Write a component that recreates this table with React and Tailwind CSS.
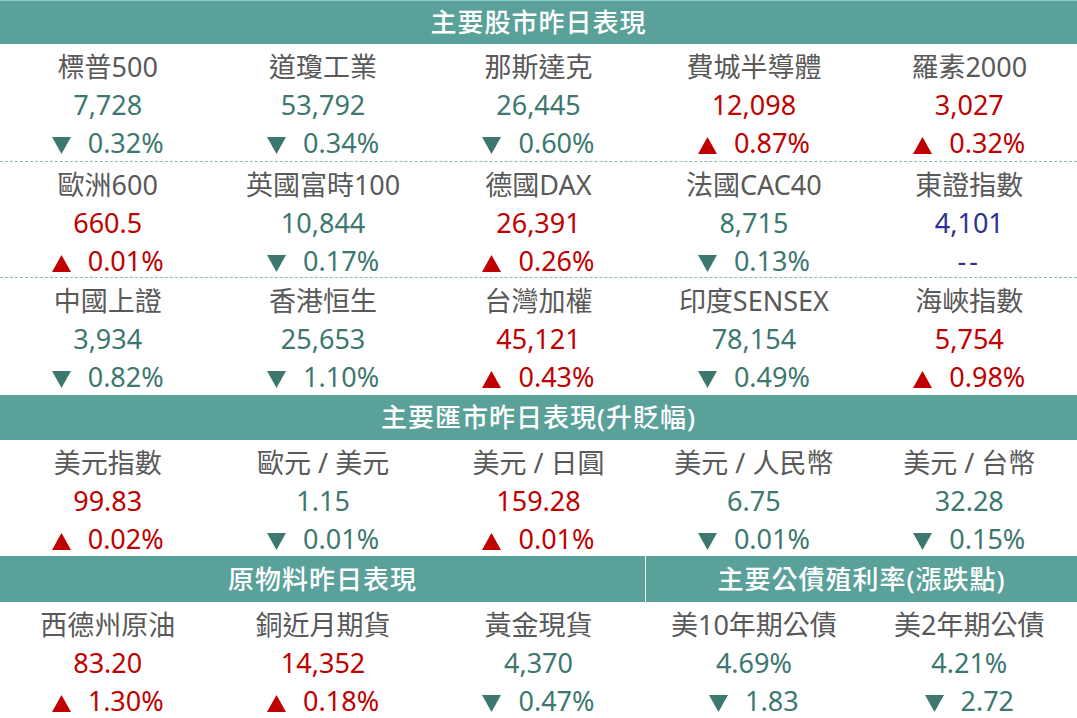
import React from "react";

const FONT = { fontFamily: '"Noto Sans", "Noto Sans CJK TC", sans-serif' };

const GREEN = "text-[#3d7870]";
const RED = "text-[#c00000]";
const BLUE = "text-[#2e3192]";

function Tri({ up, color }) {
  return (
    <svg width="19" height="17" viewBox="0 0 19 17" className="block shrink-0 mr-[17px] relative top-[2px]">
      {up ? (
        <polygon points="9.5,0 19,17 0,17" fill={color} />
      ) : (
        <polygon points="0,0 19,0 9.5,17" fill={color} />
      )}
    </svg>
  );
}

function Cell({ label, value, change, dir }) {
  const cls = dir === "up" ? RED : dir === "down" ? GREEN : BLUE;
  const col = dir === "up" ? "#c00000" : "#3d7870";
  return (
    <div className="flex flex-col items-center justify-center pt-[4px] text-[27px] leading-[38px]">
      <div className="text-[#595959]">{label}</div>
      <div className={cls}>{value}</div>
      <div className={cls + " flex items-center"}>
        {dir === "flat" ? (
          <span className="tracking-[3px]">--</span>
        ) : (
          <>
            <Tri up={dir === "up"} color={col} />
            <span>{change}</span>
          </>
        )}
      </div>
    </div>
  );
}

function Row({ items, h, dashed }) {
  return (
    <div
      className={
        "grid grid-cols-5 " + h + (dashed ? " border-b border-dashed border-[#86bdb7]" : "")
      }
    >
      {items.map((it, i) => (
        <Cell key={i} {...it} />
      ))}
    </div>
  );
}

function Header({ children, h }) {
  return (
    <div className={"bg-[#5aa19a] text-white flex items-center justify-center text-[26px] font-medium tracking-[1px] " + h}>
      {children}
    </div>
  );
}

const stock1 = [
  { label: "標普500", value: "7,728", change: "0.32%", dir: "down" },
  { label: "道瓊工業", value: "53,792", change: "0.34%", dir: "down" },
  { label: "那斯達克", value: "26,445", change: "0.60%", dir: "down" },
  { label: "費城半導體", value: "12,098", change: "0.87%", dir: "up" },
  { label: "羅素2000", value: "3,027", change: "0.32%", dir: "up" },
];
const stock2 = [
  { label: "歐洲600", value: "660.5", change: "0.01%", dir: "up" },
  { label: "英國富時100", value: "10,844", change: "0.17%", dir: "down" },
  { label: "德國DAX", value: "26,391", change: "0.26%", dir: "up" },
  { label: "法國CAC40", value: "8,715", change: "0.13%", dir: "down" },
  { label: "東證指數", value: "4,101", change: "--", dir: "flat" },
];
const stock3 = [
  { label: "中國上證", value: "3,934", change: "0.82%", dir: "down" },
  { label: "香港恒生", value: "25,653", change: "1.10%", dir: "down" },
  { label: "台灣加權", value: "45,121", change: "0.43%", dir: "up" },
  { label: "印度SENSEX", value: "78,154", change: "0.49%", dir: "down" },
  { label: "海峽指數", value: "5,754", change: "0.98%", dir: "up" },
];
const fx = [
  { label: "美元指數", value: "99.83", change: "0.02%", dir: "up" },
  { label: "歐元 / 美元", value: "1.15", change: "0.01%", dir: "down" },
  { label: "美元 / 日圓", value: "159.28", change: "0.01%", dir: "up" },
  { label: "美元 / 人民幣", value: "6.75", change: "0.01%", dir: "down" },
  { label: "美元 / 台幣", value: "32.28", change: "0.15%", dir: "down" },
];
const comm = [
  { label: "西德州原油", value: "83.20", change: "1.30%", dir: "up" },
  { label: "銅近月期貨", value: "14,352", change: "0.18%", dir: "up" },
  { label: "黃金現貨", value: "4,370", change: "0.47%", dir: "down" },
  { label: "美10年期公債", value: "4.69%", change: "1.83", dir: "down" },
  { label: "美2年期公債", value: "4.21%", change: "2.72", dir: "down" },
];

export default function App() {
  return (
    <div className="w-[1077px] h-[718px] bg-white overflow-hidden" style={FONT}>
      <Header h="h-[44px] border-t border-[#8fcbc4]">主要股市昨日表現</Header>
      <Row items={stock1} h="h-[118px]" dashed />
      <Row items={stock2} h="h-[116px]" dashed />
      <Row items={stock3} h="h-[117px]" />
      <Header h="h-[45px]">主要匯市昨日表現(升貶幅)</Header>
      <Row items={fx} h="h-[116px]" />
      <div className="flex h-[46px] bg-[#5aa19a] text-white text-[26px] font-medium tracking-[1px]">
        <div className="w-[646px] flex items-center justify-center border-r border-white">原物料昨日表現</div>
        <div className="flex-1 flex items-center justify-center">主要公債殖利率(漲跌點)</div>
      </div>
      <Row items={comm} h="h-[116px]" />
    </div>
  );
}
